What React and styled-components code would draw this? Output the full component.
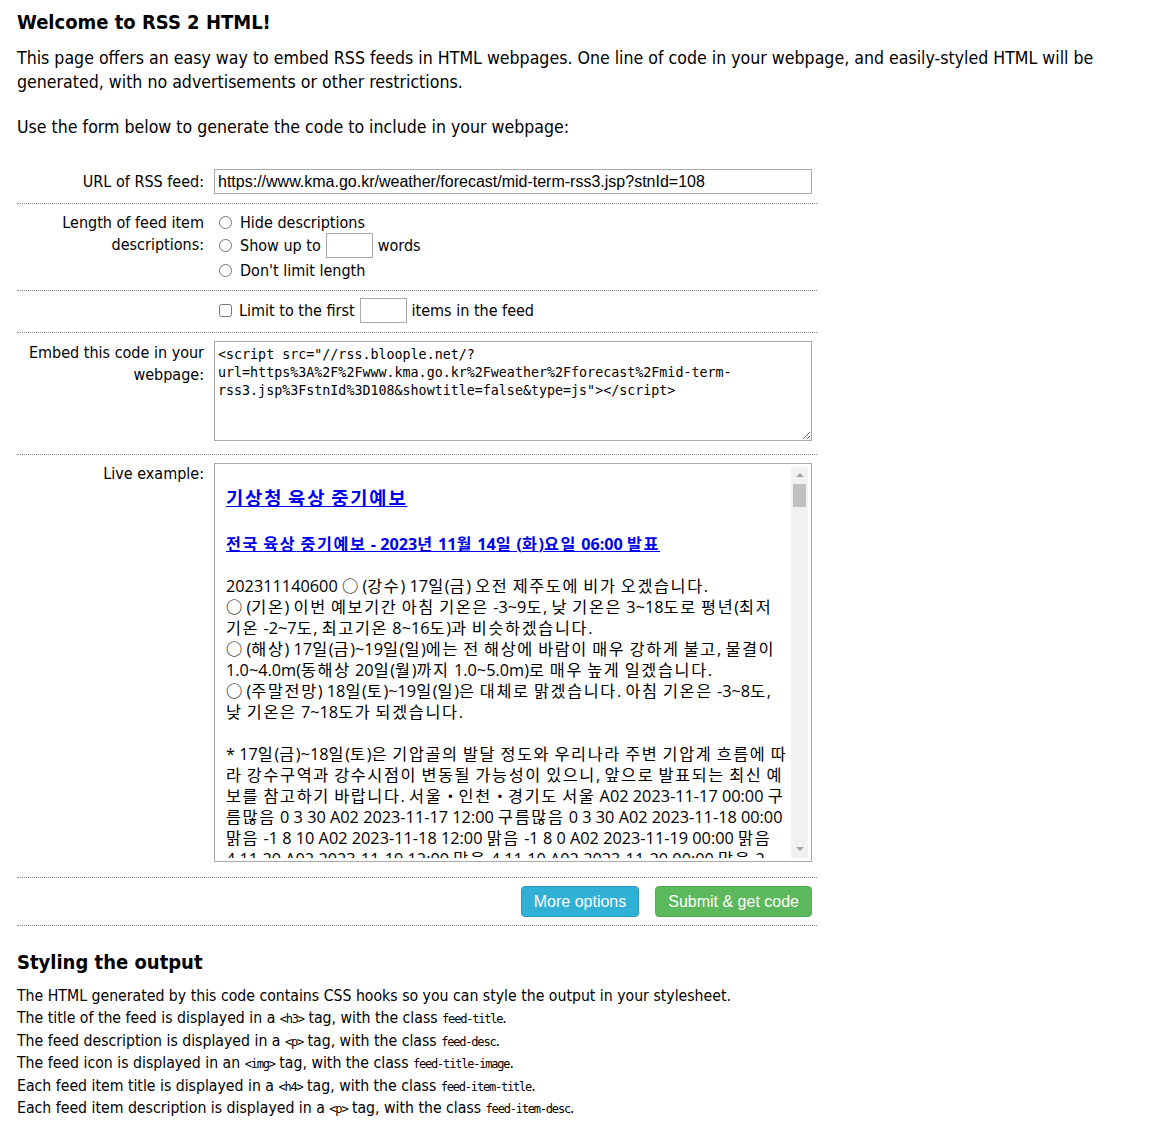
import React from "react";
import styled, { createGlobalStyle } from "styled-components";

const SANS = `"DejaVu Sans Condensed", "Liberation Sans", sans-serif`;
const KR = `"Open Sans", "Noto Sans CJK KR", sans-serif`;
const MONO = `"DejaVu Sans Mono", "Liberation Mono", monospace`;

const Global = createGlobalStyle`
  html, body { margin: 0; padding: 0; background: #fff; }
  body { font-family: ${SANS}; color: #000; }
`;

const Page = styled.div`
  padding: 0 17px 20px;
  font-size: 17px;
`;

const Title = styled.h1`
  margin: 10px 0 12px;
  font-size: 20px;
  line-height: 24px;
  font-weight: bold;
`;

const Para = styled.p`
  margin: 0 0 ${(p) => p.$mb || 0}px;
  line-height: 24px;
  font-size: 17.6px;
`;

const Form = styled.form`
  width: 800px;
  margin-top: 22px;
`;

const Row = styled.div`
  display: grid;
  grid-template-columns: 187px 598px;
  column-gap: 10px;
  padding: ${(p) => p.$pt ?? 8}px 0 ${(p) => p.$pb ?? 8}px;
  border-bottom: 1px dotted #8a8a8a;
`;

const Label = styled.div`
  text-align: right;
  font-size: 16px;
  line-height: ${(p) => p.$lh || 22}px;
  padding-top: ${(p) => p.$pt || 0}px;
`;

const Field = styled.div`
  display: flex;
  flex-direction: column;
  font-size: 16px;
`;

const TextInput = styled.input`
  box-sizing: border-box;
  width: ${(p) => p.$w || 598}px;
  height: 25px;
  border: 1px solid #a9a9a9;
  padding: 1px 3px;
  margin: 0 ${(p) => p.$mx || 0}px;
  font-family: "Liberation Sans", Arial, sans-serif;
  font-size: 16px;
  color: #000;
  outline: none;
`;

const OptionLine = styled.label`
  display: flex;
  align-items: center;
  height: ${(p) => p.$h || 22}px;
  font-size: 16px;
  cursor: default;
`;

const Radio = styled.input.attrs({ type: "radio" })`
  width: 13px;
  height: 13px;
  margin: 0 8px 0 5px;
`;

const Check = styled.input.attrs({ type: "checkbox" })`
  width: 13px;
  height: 13px;
  margin: 0 7px 0 5px;
`;

const CodeArea = styled.textarea`
  display: block;
  box-sizing: border-box;
  width: 598px;
  height: 100px;
  border: 1px solid #a9a9a9;
  padding: 4px 3px 3px;
  margin: 0;
  font-family: ${MONO};
  font-size: 13.33px;
  line-height: 18px;
  color: #000;
  outline: none;
`;

const LiveBox = styled.div`
  box-sizing: border-box;
  width: 598px;
  height: 399px;
  border: 1px solid #a9a9a9;
  padding: 3px;
  display: flex;
`;

const LiveContent = styled.div`
  flex: 1;
  overflow: hidden;
  padding: 0 8px;
  font-family: ${KR};
  color: #000;
`;

const Hangul = styled.span`
  letter-spacing: 0.1em;
`;

const FeedTitle = styled.h3`
  margin: 19px 0 24px;
  font-size: 18.72px;
  line-height: 24px;
  font-weight: bold;
  a { color: #0000ee; text-decoration: underline; }
`;

const ItemTitle = styled.h4`
  margin: 0 0 21px;
  font-size: 16.2px;
  line-height: 21px;
  font-weight: bold;
  a { color: #0000ee; text-decoration: underline; }
`;

const ItemDesc = styled.p`
  margin: 0;
  font-size: 16.3px;
  line-height: 21px;
  white-space: nowrap;
`;

const Scrollbar = styled.div`
  width: 17px;
  background: #f1f1f1;
  display: flex;
  flex-direction: column;
  align-items: center;
`;

const Arrow = styled.div`
  width: 0;
  height: 0;
  border-left: 4px solid transparent;
  border-right: 4px solid transparent;
  ${(p) =>
    p.$down
      ? "border-top: 4px solid #a3a3a3; margin-bottom: 7px;"
      : "border-bottom: 4px solid #a3a3a3; margin-top: 6px;"}
`;

const Thumb = styled.div`
  width: 13px;
  height: 23px;
  background: #c1c1c1;
  margin-top: 7px;
`;

const Spacer = styled.div`
  flex: 1;
`;

const Buttons = styled.div`
  display: flex;
  gap: 16px;
  justify-content: flex-end;
`;

const Button = styled.button`
  font-family: "Liberation Sans", Arial, sans-serif;
  font-size: 16px;
  line-height: 19px;
  padding: 5px 12px;
  color: #fff;
  border-radius: 4px;
  border: 1px solid ${(p) => (p.$kind === "info" ? "#269abc" : "#4cae4c")};
  background: ${(p) => (p.$kind === "info" ? "#31b0d5" : "#5cb85c")};
  cursor: pointer;
`;

const SubHead = styled.h3`
  margin: 24px 0 11px;
  font-size: 20px;
  line-height: 24px;
  font-weight: bold;
`;

const Notes = styled.div`
  font-size: 15.7px;
  line-height: 22.4px;
`;

const NoteLine = styled.div`
  height: 22.4px;
`;

const Code = styled.code`
  font-family: ${MONO};
  font-size: 12px;
  line-height: 1;
  letter-spacing: -1.2px;
`;

const HANGUL_RE = /([\uAC00-\uD7A3\u3131-\u318E]+)/;
const kr = (text) =>
  text.split(HANGUL_RE).map((part, i) => (i % 2 === 1 ? <Hangul key={i}>{part}</Hangul> : part));

const descLines = [
  "202311140600 ○ (강수) 17일(금) 오전 제주도에 비가 오겠습니다.",
  "○ (기온) 이번 예보기간 아침 기온은 -3~9도, 낮 기온은 3~18도로 평년(최저",
  "기온 -2~7도, 최고기온 8~16도)과 비슷하겠습니다.",
  "○ (해상) 17일(금)~19일(일)에는 전 해상에 바람이 매우 강하게 불고, 물결이",
  "1.0~4.0m(동해상 20일(월)까지 1.0~5.0m)로 매우 높게 일겠습니다.",
  "○ (주말전망) 18일(토)~19일(일)은 대체로 맑겠습니다. 아침 기온은 -3~8도,",
  "낮 기온은 7~18도가 되겠습니다.",
  "",
  "* 17일(금)~18일(토)은 기압골의 발달 정도와 우리나라 주변 기압계 흐름에 따",
  "라 강수구역과 강수시점이 변동될 가능성이 있으니, 앞으로 발표되는 최신 예",
  "보를 참고하기 바랍니다. 서울・인천・경기도 서울 A02 2023-11-17 00:00 구",
  "름많음 0 3 30 A02 2023-11-17 12:00 구름많음 0 3 30 A02 2023-11-18 00:00",
  "맑음 -1 8 10 A02 2023-11-18 12:00 맑음 -1 8 0 A02 2023-11-19 00:00 맑음",
  "4 11 20 A02 2023-11-19 12:00 맑음 4 11 10 A02 2023-11-20 00:00 맑음 2",
  "0 11 10 A02 2023-11-20 12:00 맑음 0 11 0",
];

const codeText =
  '<script src="//rss.bloople.net/?url=https%3A%2F%2Fwww.kma.go.kr%2Fweather%2Fforecast%2Fmid-term-rss3.jsp%3FstnId%3D108&showtitle=false&type=js"></script>';

const notes = [
  ["The HTML generated by this code contains CSS hooks so you can style the output in your stylesheet."],
  ["The title of the feed is displayed in a ", "<h3>", " tag, with the class ", "feed-title", "."],
  ["The feed description is displayed in a ", "<p>", " tag, with the class ", "feed-desc", "."],
  ["The feed icon is displayed in an ", "<img>", " tag, with the class ", "feed-title-image", "."],
  ["Each feed item title is displayed in a ", "<h4>", " tag, with the class ", "feed-item-title", "."],
  ["Each feed item description is displayed in a ", "<p>", " tag, with the class ", "feed-item-desc", "."],
];

export default function App() {
  return (
    <>
      <Global />
      <Page>
        <Title>Welcome to RSS 2 HTML!</Title>
        <Para $mb={21}>
          This page offers an easy way to embed RSS feeds in HTML webpages. One line of code in your
          webpage, and easily-styled HTML will be generated, with no advertisements or other
          restrictions.
        </Para>
        <Para>Use the form below to generate the code to include in your webpage:</Para>

        <Form onSubmit={(e) => e.preventDefault()}>
          <Row $pt={8} $pb={9}>
            <Label $lh={25}>URL of RSS feed:</Label>
            <Field>
              <TextInput defaultValue="https://www.kma.go.kr/weather/forecast/mid-term-rss3.jsp?stnId=108" />
            </Field>
          </Row>

          <Row $pt={8} $pb={8}>
            <Label>
              Length of feed item
              <br />
              descriptions:
            </Label>
            <Field>
              <OptionLine $h={21}>
                <Radio name="len" />
                Hide descriptions
              </OptionLine>
              <OptionLine $h={25}>
                <Radio name="len" />
                Show up to
                <TextInput $w={47} $mx={5} />
                words
              </OptionLine>
              <OptionLine $h={24}>
                <Radio name="len" />
                Don't limit length
              </OptionLine>
            </Field>
          </Row>

          <Row $pt={7} $pb={9}>
            <Label />
            <Field>
              <OptionLine $h={25}>
                <Check />
                Limit to the first
                <TextInput $w={47} $mx={5} />
                items in the feed
              </OptionLine>
            </Field>
          </Row>

          <Row $pt={8} $pb={13}>
            <Label $pt={1}>
              Embed this code in your
              <br />
              webpage:
            </Label>
            <Field>
              <CodeArea readOnly value={codeText} />
            </Field>
          </Row>

          <Row $pt={8} $pb={15}>
            <Label>Live example:</Label>
            <Field>
              <LiveBox>
                <LiveContent>
                  <FeedTitle>
                    <a href="#">{kr("기상청 육상 중기예보")}</a>
                  </FeedTitle>
                  <ItemTitle>
                    <a href="#">{kr("전국 육상 중기예보 - 2023년 11월 14일 (화)요일 06:00 발표")}</a>
                  </ItemTitle>
                  <ItemDesc>
                    {descLines.map((l, i) => (
                      <React.Fragment key={i}>
                        {kr(l)}
                        <br />
                      </React.Fragment>
                    ))}
                  </ItemDesc>
                </LiveContent>
                <Scrollbar>
                  <Arrow />
                  <Thumb />
                  <Spacer />
                  <Arrow $down />
                </Scrollbar>
              </LiveBox>
            </Field>
          </Row>

          <Row $pt={8} $pb={8}>
            <Label />
            <Field>
              <Buttons>
                <Button type="button" $kind="info">More options</Button>
                <Button type="submit" $kind="success">Submit &amp; get code</Button>
              </Buttons>
            </Field>
          </Row>
        </Form>

        <SubHead>Styling the output</SubHead>
        <Notes>
          {notes.map((parts, i) => (
            <NoteLine key={i}>
              {parts.map((p, j) => (j % 2 === 1 ? <Code key={j}>{p}</Code> : <span key={j}>{p}</span>))}
            </NoteLine>
          ))}
        </Notes>
      </Page>
    </>
  );
}
